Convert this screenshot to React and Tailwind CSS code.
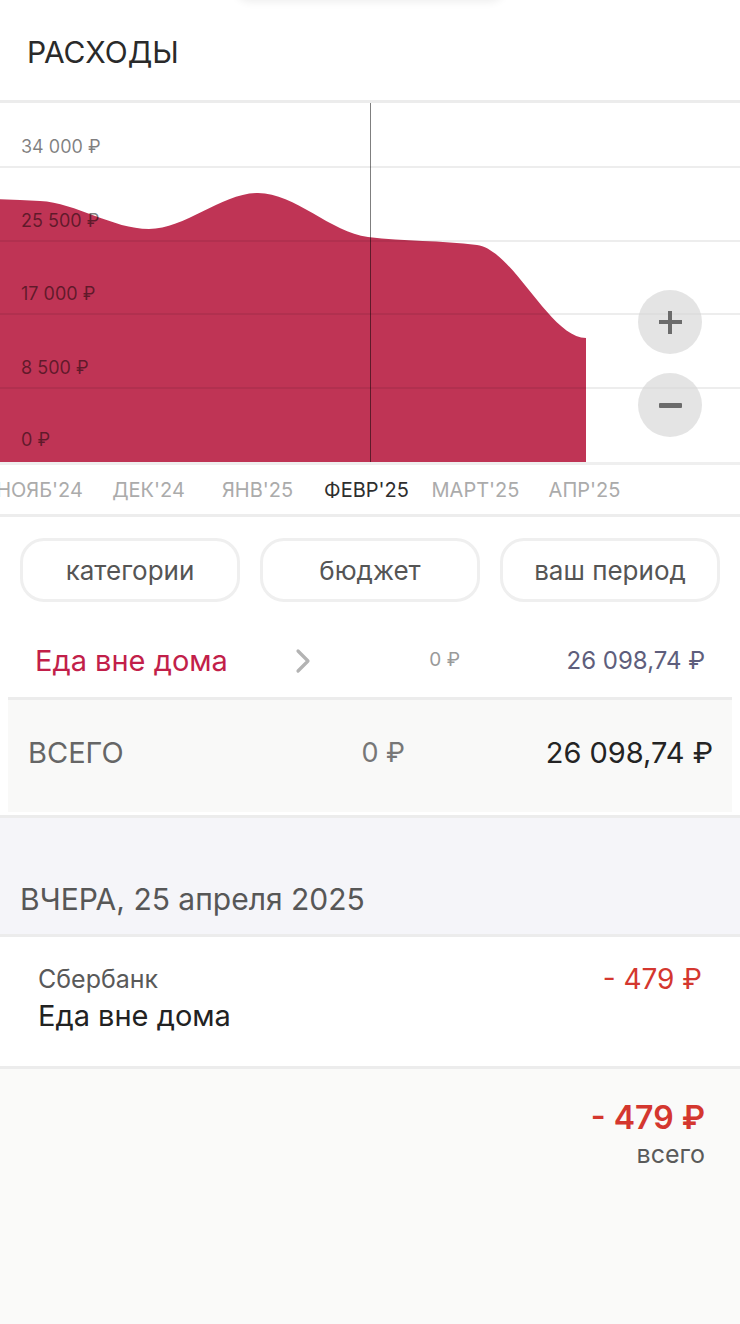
import React from "react";

function Chevron() {
  return (
    <svg width="20" height="28" viewBox="0 0 20 28" className="shrink-0">
      <polyline points="5,4 15,14 5,24" fill="none" stroke="#b3b3b3" strokeWidth="3.2" strokeLinecap="round" strokeLinejoin="round" />
    </svg>
  );
}

function Chart() {
  const d =
    "M -69 95 C -32.7 95 3.7 96.2 40 98 C 76.3 99.8 112.7 126 149 126 C 185.3 126 221.7 90 258 90 C 294.7 90 331.3 129.6 368 134 C 404.3 138.4 440.7 137.3 477 142 C 513.3 146.7 549.7 235 586 235 L 586 359 L -69 359 Z";
  const rows = [
    { h: "h-[65px]", label: "34 000 ₽", line: true },
    { h: "h-[74px]", label: "25 500 ₽", line: true },
    { h: "h-[73px]", label: "17 000 ₽", line: true },
    { h: "h-[74px]", label: "8 500 ₽", line: true },
    { h: "h-[73px]", label: "0 ₽", line: false },
  ];
  return (
    <div className="relative h-[359px] bg-white overflow-hidden">
      <svg className="absolute left-0 top-0" width="740" height="359" viewBox="0 0 740 359">
        <path d={d} fill="#bf3455" />
        <line x1="370.5" y1="0" x2="370.5" y2="359" stroke="rgba(0,0,0,0.5)" strokeWidth="1" />
      </svg>
      <div className="relative flex flex-col">
        {rows.map((r) => (
          <div
            key={r.label}
            className={`${r.h} flex items-end pl-[21px] ${r.line ? "border-b-2 border-black/[0.07] pb-[7px]" : "pb-[10px]"}`}
          >
            <span className="text-[18px] leading-[24px] text-black/50">{r.label}</span>
          </div>
        ))}
      </div>
      <button className="absolute right-[38px] top-[187px] w-[64px] h-[64px] rounded-full bg-[#d6d6d6]/65 flex items-center justify-center">
        <span className="relative block w-[23px] h-[23px]">
          <span className="absolute left-0 top-[9.5px] w-[23px] h-[4px] bg-[#6b6b6b]" />
          <span className="absolute top-0 left-[9.5px] h-[23px] w-[4px] bg-[#6b6b6b]" />
        </span>
      </button>
      <button className="absolute right-[38px] top-[270px] w-[64px] h-[64px] rounded-full bg-[#d6d6d6]/65 flex items-center justify-center">
        <span className="block w-[23px] h-[5px] rounded-[1px] bg-[#6b6b6b]" />
      </button>
    </div>
  );
}

export default function App() {
  const months = [
    { t: "НОЯБ'24", a: false },
    { t: "ДЕК'24", a: false },
    { t: "ЯНВ'25", a: false },
    { t: "ФЕВР'25", a: true },
    { t: "МАРТ'25", a: false },
    { t: "АПР'25", a: false },
  ];
  return (
    <div className="relative w-[740px] min-h-[1324px] bg-[#fafaf9] overflow-hidden font-['Inter','Roboto',sans-serif]">
      <div className="absolute left-[235px] top-[-30px] w-[270px] h-[30px] rounded-full bg-white shadow-[0_2px_8px_rgba(0,0,0,0.07)]" />

      <header className="h-[100px] bg-white flex items-center pl-[27px] pt-[4px]">
        <h1 className="text-[30px] leading-[36px] text-[#2a2a2a]">РАСХОДЫ</h1>
      </header>
      <div className="h-[3px] bg-[#ececec]" />

      <Chart />
      <div className="h-[3px] bg-[#efefef]" />

      <div className="h-[49px] bg-white flex items-center -ml-[15px] overflow-hidden">
        {months.map((m) => (
          <div
            key={m.t}
            className={`w-[109px] shrink-0 text-center whitespace-nowrap text-[20px] leading-[24px] ${m.a ? "text-[#2e2e2e]" : "text-[#ababab]"}`}
          >
            {m.t}
          </div>
        ))}
      </div>
      <div className="h-[3px] bg-[#ededed]" />

      <div className="bg-white">
        <div className="flex gap-[20px] px-[20px] pt-[21px] pb-[2px]">
          {["категории", "бюджет", "ваш период"].map((p) => (
            <div
              key={p}
              className="flex-1 h-[64px] rounded-[24px] border-[3px] border-[#efefef] flex items-center justify-center text-[26px] text-[#555]"
            >
              {p}
            </div>
          ))}
        </div>

        <div className="h-[93px] pt-[20px] flex items-center pl-[35px] pr-[35px]">
          <div className="w-[258px] text-[29px] text-[#c21f4a]">Еда вне дома</div>
          <Chevron />
          <div className="w-[147px] text-right text-[19px] text-[#9a9a9a]">0 ₽</div>
          <div className="flex-1 text-right text-[24px] text-[#5e5e7c]">26 098,74 ₽</div>
        </div>

        <div className="mx-[8px] border-t-[3px] border-[#ececec] bg-[#f9f9f8] h-[115px] pb-[6px] flex items-center pl-[20px] pr-[19px]">
          <div className="w-[250px] text-[29px] text-[#666]">ВСЕГО</div>
          <div className="w-[127px] text-right text-[27px] text-[#777]">0 ₽</div>
          <div className="flex-1 text-right text-[29px] text-[#242424]">26 098,74 ₽</div>
        </div>
        <div className="h-[3px]" />
      </div>
      <div className="h-[3px] bg-[#ececec]" />

      <div className="h-[116px] bg-[#f5f5f9] pt-[64px] pl-[20px]">
        <div className="text-[30px] leading-[34px] text-[#575757]">ВЧЕРА, 25 апреля 2025</div>
      </div>
      <div className="h-[3px] bg-[#ececec]" />

      <div className="h-[129px] bg-white pt-[26px] pl-[38px] pr-[38px] flex justify-between">
        <div>
          <div className="text-[25px] leading-[32px] text-[#595959]">Сбербанк</div>
          <div className="text-[29px] leading-[42px] text-[#222]">Еда вне дома</div>
        </div>
        <div className="text-[28px] leading-[32px] text-[#d4372f]">- 479 ₽</div>
      </div>
      <div className="h-[3px] bg-[#ececec]" />

      <div className="bg-[#fafaf9] pt-[30px] pr-[35px] flex flex-col items-end">
        <div className="text-[32px] leading-[38px] font-semibold text-[#d4372f]">- 479 ₽</div>
        <div className="text-[25px] leading-[34px] text-[#5a5a5a]">всего</div>
      </div>
    </div>
  );
}
